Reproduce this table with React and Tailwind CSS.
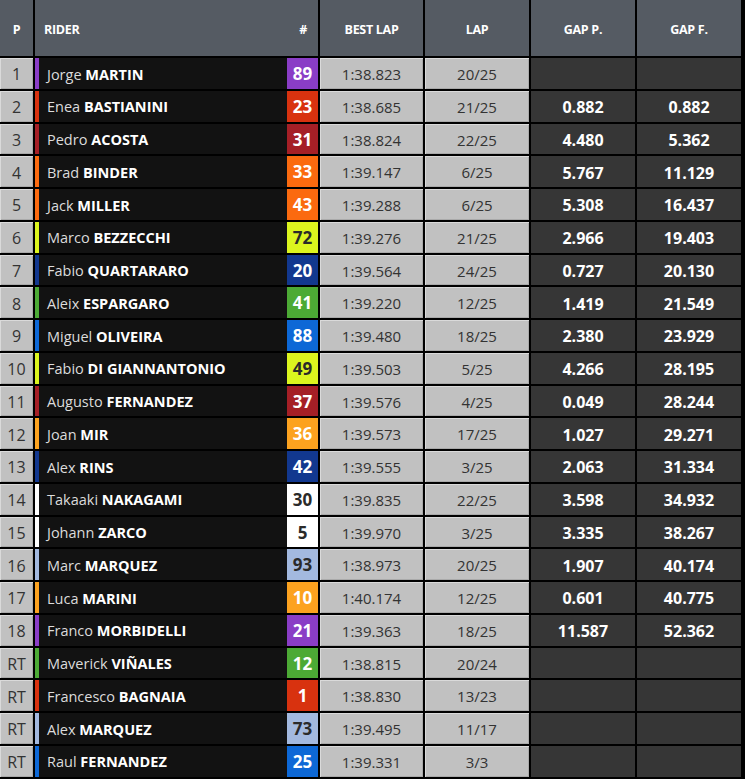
import React from "react";

const riders = [
  { p: "1", first: "Jorge", last: "MARTIN", num: "89", color: "#8a3dc6", dark: false, best: "1:38.823", lap: "20/25", gp: "", gf: "" },
  { p: "2", first: "Enea", last: "BASTIANINI", num: "23", color: "#d8320f", dark: false, best: "1:38.685", lap: "21/25", gp: "0.882", gf: "0.882" },
  { p: "3", first: "Pedro", last: "ACOSTA", num: "31", color: "#a51f26", dark: false, best: "1:38.824", lap: "22/25", gp: "4.480", gf: "5.362" },
  { p: "4", first: "Brad", last: "BINDER", num: "33", color: "#fb6a0f", dark: false, best: "1:39.147", lap: "6/25", gp: "5.767", gf: "11.129" },
  { p: "5", first: "Jack", last: "MILLER", num: "43", color: "#fb6a0f", dark: false, best: "1:39.288", lap: "6/25", gp: "5.308", gf: "16.437" },
  { p: "6", first: "Marco", last: "BEZZECCHI", num: "72", color: "#dcf51e", dark: true, best: "1:39.276", lap: "21/25", gp: "2.966", gf: "19.403" },
  { p: "7", first: "Fabio", last: "QUARTARARO", num: "20", color: "#12388f", dark: false, best: "1:39.564", lap: "24/25", gp: "0.727", gf: "20.130" },
  { p: "8", first: "Aleix", last: "ESPARGARO", num: "41", color: "#4caa35", dark: false, best: "1:39.220", lap: "12/25", gp: "1.419", gf: "21.549" },
  { p: "9", first: "Miguel", last: "OLIVEIRA", num: "88", color: "#0d68d6", dark: false, best: "1:39.480", lap: "18/25", gp: "2.380", gf: "23.929" },
  { p: "10", first: "Fabio", last: "DI GIANNANTONIO", num: "49", color: "#dcf51e", dark: true, best: "1:39.503", lap: "5/25", gp: "4.266", gf: "28.195" },
  { p: "11", first: "Augusto", last: "FERNANDEZ", num: "37", color: "#a51f26", dark: false, best: "1:39.576", lap: "4/25", gp: "0.049", gf: "28.244" },
  { p: "12", first: "Joan", last: "MIR", num: "36", color: "#fca21f", dark: false, best: "1:39.573", lap: "17/25", gp: "1.027", gf: "29.271" },
  { p: "13", first: "Alex", last: "RINS", num: "42", color: "#12388f", dark: false, best: "1:39.555", lap: "3/25", gp: "2.063", gf: "31.334" },
  { p: "14", first: "Takaaki", last: "NAKAGAMI", num: "30", color: "#ffffff", dark: true, best: "1:39.835", lap: "22/25", gp: "3.598", gf: "34.932" },
  { p: "15", first: "Johann", last: "ZARCO", num: "5", color: "#ffffff", dark: true, best: "1:39.970", lap: "3/25", gp: "3.335", gf: "38.267" },
  { p: "16", first: "Marc", last: "MARQUEZ", num: "93", color: "#a3b9df", dark: true, best: "1:38.973", lap: "20/25", gp: "1.907", gf: "40.174" },
  { p: "17", first: "Luca", last: "MARINI", num: "10", color: "#fca21f", dark: false, best: "1:40.174", lap: "12/25", gp: "0.601", gf: "40.775" },
  { p: "18", first: "Franco", last: "MORBIDELLI", num: "21", color: "#8a3dc6", dark: false, best: "1:39.363", lap: "18/25", gp: "11.587", gf: "52.362" },
  { p: "RT", first: "Maverick", last: "VIÑALES", num: "12", color: "#4caa35", dark: false, best: "1:38.815", lap: "20/24", gp: "", gf: "" },
  { p: "RT", first: "Francesco", last: "BAGNAIA", num: "1", color: "#d8320f", dark: false, best: "1:38.830", lap: "13/23", gp: "", gf: "" },
  { p: "RT", first: "Alex", last: "MARQUEZ", num: "73", color: "#a3b9df", dark: true, best: "1:39.495", lap: "11/17", gp: "", gf: "" },
  { p: "RT", first: "Raul", last: "FERNANDEZ", num: "25", color: "#0d68d6", dark: false, best: "1:39.331", lap: "3/3", gp: "", gf: "" },
];

const grid = "grid grid-cols-[33px_283px_103px_104px_104px_104px] gap-x-[2px]";
const light = "bg-[#c1c1c1] shadow-[inset_1px_1px_0_#dadada,inset_-1px_-1px_0_#a9a9a9] text-[#333] text-[15px] flex items-center justify-center pt-[2px]";
const dark = "bg-[#363636] text-white font-bold text-[16px] flex items-center justify-center pt-[2px]";

function Row({ r }) {
  return (
    <div className={`${grid} h-[30.75px]`}>
      <div className={`${light} text-[16px]`}>{r.p}</div>
      <div className="flex bg-[#121212]">
        <div className="w-[4px]" style={{ backgroundColor: r.color }}></div>
        <div className="flex-1 flex items-center pl-[8px] pt-[2px] text-[14.5px] text-[#dcdcdc] whitespace-nowrap">
          {r.first}&nbsp;<span className="font-bold text-white">{r.last}</span>
        </div>
        <div
          className={`w-[31px] flex items-center justify-center pt-[1px] text-[17px] font-bold ${r.dark ? "text-[#2a2a2a]" : "text-white"}`}
          style={{ backgroundColor: r.color }}
        >
          {r.num}
        </div>
      </div>
      <div className={light}>{r.best}</div>
      <div className={light}>{r.lap}</div>
      <div className={dark}>{r.gp}</div>
      <div className={dark}>{r.gf}</div>
    </div>
  );
}

export default function App() {
  return (
    <div className="w-[745px] h-[779px] bg-black overflow-hidden font-['Open_Sans',sans-serif]">
      {/* Header */}
      <div className={`${grid} h-[56px] text-white font-bold text-[12.5px] uppercase tracking-[-0.3px]`}>
        <div className="bg-[#555b63] flex items-center justify-center pt-[4px]">P</div>
        <div className="bg-[#555b63] flex items-center pl-[9px] pr-[11px] pt-[4px] justify-between">
          <span>Rider</span>
          <span>#</span>
        </div>
        <div className="bg-[#555b63] flex items-center justify-center pt-[4px]">Best Lap</div>
        <div className="bg-[#555b63] flex items-center justify-center pt-[4px]">Lap</div>
        <div className="bg-[#555b63] flex items-center justify-center pt-[4px]">Gap P.</div>
        <div className="bg-[#555b63] flex items-center justify-center pt-[4px]">Gap F.</div>
      </div>

      {/* Results */}
      <div className="flex flex-col gap-y-[2px] mt-[2px]">
        {riders.map((r, i) => (
          <Row key={i} r={r} />
        ))}
      </div>
    </div>
  );
}
